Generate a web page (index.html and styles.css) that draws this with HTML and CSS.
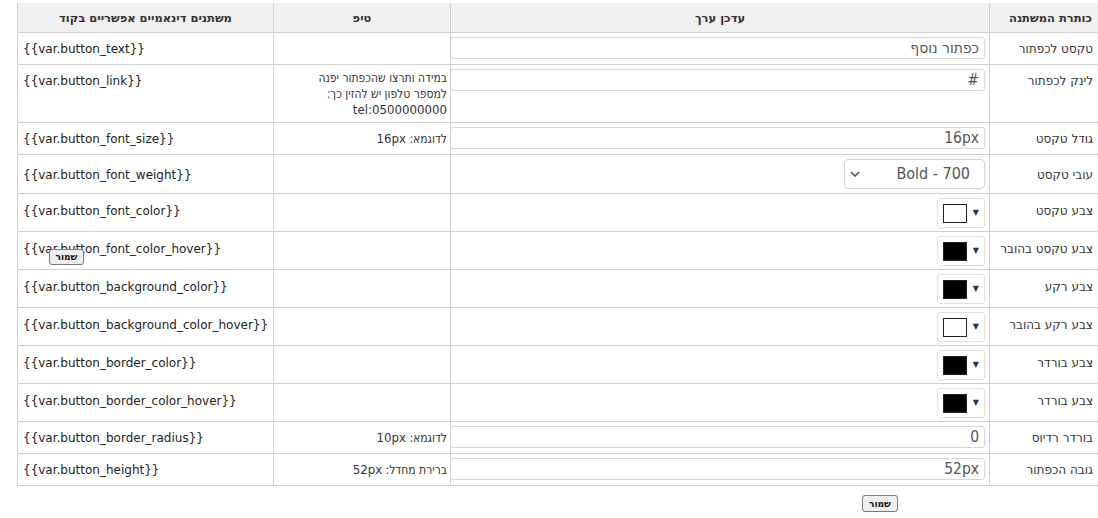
FILE: index.html
```html
<!DOCTYPE html>
<html lang="he" dir="rtl">
<head>
<meta charset="utf-8">
<title>משתני כפתור</title>
<link rel="stylesheet" href="styles.css">
</head>
<body>
<div class="page">
  <table class="vars">
    <colgroup>
      <col class="c-label">
      <col class="c-value">
      <col class="c-tip">
      <col class="c-code">
    </colgroup>
    <thead>
      <tr>
        <th>כותרת המשתנה</th>
        <th>עדכן ערך</th>
        <th>טיפ</th>
        <th>משתנים דינאמיים אפשריים בקוד</th>
      </tr>
    </thead>
    <tbody>
      <tr>
        <td class="label">טקסט לכפתור</td>
        <td class="value"><input class="field" type="text" value="כפתור נוסף"></td>
        <td class="tip"></td>
        <td class="code" dir="ltr">{{var.button_text}}</td>
      </tr>
      <tr>
        <td class="label">לינק לכפתור</td>
        <td class="value"><input class="field" type="text" value="#"></td>
        <td class="tip tall">במידה ותרצו שהכפתור יפנה<br>למספר טלפון יש להזין כך:<br><span class="latin">tel:0500000000</span></td>
        <td class="code" dir="ltr">{{var.button_link}}</td>
      </tr>
      <tr>
        <td class="label">גודל טקסט</td>
        <td class="value"><input class="field" type="text" value="16px"></td>
        <td class="tip">לדוגמא: <span class="latin">16px</span></td>
        <td class="code" dir="ltr">{{var.button_font_size}}</td>
      </tr>
      <tr class="row-select">
        <td class="label">עובי טקסט</td>
        <td class="value">
          <div class="select">
            <span class="select-text">Bold - 700</span>
            <svg class="chevron" width="10" height="6" viewBox="0 0 10 6"><path d="M1 1l4 4 4-4" fill="none" stroke="#555" stroke-width="1.6"/></svg>
          </div>
        </td>
        <td class="tip"></td>
        <td class="code" dir="ltr">{{var.button_font_weight}}</td>
      </tr>
      <tr>
        <td class="label">צבע טקסט</td>
        <td class="value"><div class="picker"><span class="caret">▼</span><span class="swatch white"></span></div></td>
        <td class="tip"></td>
        <td class="code" dir="ltr">{{var.button_font_color}}</td>
      </tr>
      <tr>
        <td class="label">צבע טקסט בהובר</td>
        <td class="value"><div class="picker"><span class="caret">▼</span><span class="swatch black"></span></div></td>
        <td class="tip"></td>
        <td class="code" dir="ltr">{{var.button_font_color_hover}}</td>
      </tr>
      <tr>
        <td class="label">צבע רקע</td>
        <td class="value"><div class="picker"><span class="caret">▼</span><span class="swatch black"></span></div></td>
        <td class="tip"></td>
        <td class="code" dir="ltr">{{var.button_background_color}}</td>
      </tr>
      <tr>
        <td class="label">צבע רקע בהובר</td>
        <td class="value"><div class="picker"><span class="caret">▼</span><span class="swatch white"></span></div></td>
        <td class="tip"></td>
        <td class="code" dir="ltr">{{var.button_background_color_hover}}</td>
      </tr>
      <tr>
        <td class="label">צבע בורדר</td>
        <td class="value"><div class="picker"><span class="caret">▼</span><span class="swatch black"></span></div></td>
        <td class="tip"></td>
        <td class="code" dir="ltr">{{var.button_border_color}}</td>
      </tr>
      <tr>
        <td class="label">צבע בורדר</td>
        <td class="value"><div class="picker"><span class="caret">▼</span><span class="swatch black"></span></div></td>
        <td class="tip"></td>
        <td class="code" dir="ltr">{{var.button_border_color_hover}}</td>
      </tr>
      <tr>
        <td class="label">בורדר רדיוס</td>
        <td class="value"><input class="field" type="text" value="0"></td>
        <td class="tip">לדוגמא: <span class="latin">10px</span></td>
        <td class="code" dir="ltr">{{var.button_border_radius}}</td>
      </tr>
      <tr>
        <td class="label">גובה הכפתור</td>
        <td class="value"><input class="field" type="text" value="52px"></td>
        <td class="tip">ברירת מחדל: <span class="latin">52px</span></td>
        <td class="code" dir="ltr">{{var.button_height}}</td>
      </tr>
    </tbody>
  </table>
  <div class="actions">
    <button class="save" type="button">שמור</button>
  </div>
  <button class="save floating" type="button">שמור</button>
</div>
</body>
</html>
```
FILE: styles.css
```css
html, body {
  margin: 0;
  padding: 0;
  background: #fff;
  overflow: hidden;
}

body {
  font-family: "DejaVu Sans", sans-serif;
  color: #222;
}

/* the table runs a little wider than the window; keep it anchored on the left */
.page {
  position: relative;
  direction: ltr;
  padding: 3px 0 0 17px;
}

/* main variables table */
.vars {
  direction: rtl;
  width: 1083px;
  border-collapse: collapse;
  table-layout: fixed;
}

.c-label { width: 111px; }
.c-value { width: 539px; }
.c-tip { width: 177px; }
.c-code { width: 256px; }

.vars th,
.vars td {
  border: 1px solid #cfcfcf;
}

.vars thead th {
  border-top-color: #f0f0f0;
}

.vars th {
  background: #f0f0f0;
  height: 28px;
  padding: 0;
  font-size: 11.5px;
  font-weight: bold;
  color: #333;
  text-align: center;
}

.vars th:first-child {
  text-align: right;
  padding-right: 8px;
}

.vars td {
  vertical-align: baseline;
  font-size: 12px;
  line-height: 16px;
}

.label {
  text-align: right;
  padding: 0 7px 0 0;
  color: #333;
  font-size: 12px;
}

.code {
  text-align: left;
  padding: 0 0 0 5px;
  font-size: 12.7px;
  color: #222;
}

.tip {
  text-align: right;
  padding: 0 3px 0 0;
  font-family: "DejaVu Sans Condensed", "DejaVu Sans", sans-serif;
  font-size: 11.3px;
  line-height: 13px;
  color: #333;
}

.tip .latin {
  font-family: "DejaVu Sans", sans-serif;
  font-size: 11.8px;
}

.tip.tall {
  vertical-align: bottom;
  padding: 5px 3px 4px 0;
}

.value {
  padding: 4px 4px 0 0;
  text-align: right;
}

/* text inputs */
.field {
  box-sizing: border-box;
  display: block;
  width: calc(100% + 1px);
  height: 22px;
  margin: 0 0 5px;
  padding: 0 5px;
  border: 1px solid #d6d6d6;
  border-radius: 3px;
  background: #fff;
  font-family: "DejaVu Sans Condensed", "DejaVu Sans", sans-serif;
  font-size: 15.5px;
  line-height: 20px;
  color: #555;
  text-align: right;
  direction: rtl;
}

/* select box */
.select {
  box-sizing: border-box;
  display: flex;
  align-items: center;
  justify-content: space-between;
  width: 141px;
  height: 30px;
  margin: 0 0 4px auto;
  padding: 0 14px 0 5px;
  border: 1px solid #cdd3da;
  border-radius: 4px;
  background: #fff;
}

.select-text {
  font-family: "DejaVu Sans Condensed", "DejaVu Sans", sans-serif;
  font-size: 16px;
  color: #555;
  direction: ltr;
  line-height: 20px;
}

.chevron {
  display: block;
}

/* colour pickers */
.picker {
  box-sizing: border-box;
  display: flex;
  align-items: center;
  gap: 6px;
  width: 48px;
  height: 30px;
  margin: 0 0 3px auto;
  padding: 0 5px 0 0;
  border: 1px solid #e6e0da;
  border-radius: 3px;
  background: #fff;
}

.swatch {
  box-sizing: border-box;
  display: block;
  width: 24px;
  height: 19px;
  border: 1px solid #222;
}

.swatch.white { background: #fff; }
.swatch.black { background: #000; }

.caret {
  font-size: 8px;
  line-height: 16px;
  color: #333;
}

/* save buttons */
.actions {
  direction: rtl;
  display: flex;
  padding: 9px 200px 0 0;
}

.save {
  box-sizing: border-box;
  height: 17px;
  width: 36px;
  padding: 0;
  border: 1px solid #7a7a7a;
  border-radius: 3px;
  background: #efefef;
  font-family: "DejaVu Sans Condensed", "DejaVu Sans", sans-serif;
  font-size: 10px;
  font-weight: bold;
  color: #111;
  line-height: 14px;
}

.save.floating {
  position: absolute;
  left: 49px;
  top: 249px;
  width: 35px;
  height: 16px;
}
```
